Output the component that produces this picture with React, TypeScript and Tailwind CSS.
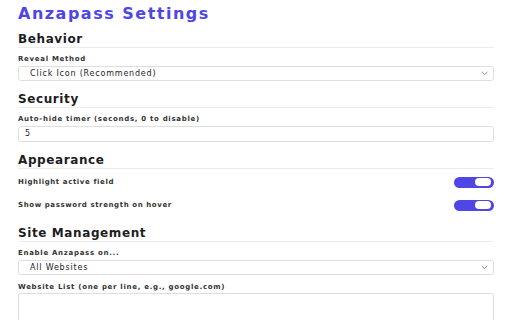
import React from "react";

const font = { fontFamily: '"DejaVu Sans", "Liberation Sans", sans-serif' };

function SectionHeading({ children, className = "" }: { children: React.ReactNode; className?: string }) {
  return (
    <h2
      className={`h-[16px] border-b border-[#ececec] pb-[1px] text-[12px] font-bold leading-[14px] tracking-[0.6px] text-[#1d1d1f] ${className}`}
    >
      {children}
    </h2>
  );
}

function Label({ children, className = "" }: { children: React.ReactNode; className?: string }) {
  return (
    <label className={`block h-[10px] text-[7px] font-bold leading-[10px] tracking-[0.7px] text-[#333] ${className}`}>
      {children}
    </label>
  );
}

function Chevron() {
  return (
    <svg width="7" height="5" viewBox="0 0 7 5" className="text-[#777]">
      <path d="M1 1.2 L3.5 3.6 L6 1.2" fill="none" stroke="currentColor" strokeWidth="0.9" strokeLinecap="round" />
    </svg>
  );
}

function SelectBox({ value }: { value: string }) {
  return (
    <div className="mt-[2px] flex h-[15px] items-center justify-between rounded-[3px] border border-[#dedede] bg-white pl-[11px] pr-[5px]">
      <span className="text-[8px] leading-[10px] tracking-[0.8px] text-[#1d1d1f]">{value}</span>
      <Chevron />
    </div>
  );
}

function Toggle() {
  return (
    <div className="flex h-[11px] w-[40px] items-center justify-end rounded-full bg-[#4f46e5] pr-[3px]">
      <div className="h-[8px] w-[16px] rounded-full bg-white" />
    </div>
  );
}

function ToggleRow({ label }: { label: string }) {
  return (
    <div className="flex h-[22px] items-center justify-between">
      <span className="text-[7px] font-bold tracking-[0.6px] text-[#333]">{label}</span>
      <Toggle />
    </div>
  );
}

export default function App() {
  return (
    <div className="h-[320px] w-[512px] overflow-hidden bg-white px-[18px] pt-[4px]" style={font}>
      <h1 className="h-[20px] text-[16px] font-bold leading-[20px] tracking-[1.5px] text-[#4f46e5]">
        Anzapass Settings
      </h1>

      <SectionHeading className="mt-[8px]">Behavior</SectionHeading>
      <Label className="mt-[6px]">Reveal Method</Label>
      <SelectBox value="Click Icon (Recommended)" />

      <SectionHeading className="mt-[11px]">Security</SectionHeading>
      <Label className="mt-[6px]">Auto-hide timer (seconds, 0 to disable)</Label>
      <div className="mt-[2px] flex h-[16px] items-center rounded-[3px] border border-[#dedede] bg-white pl-[6px]">
        <span className="text-[8px] tracking-[0.8px] text-[#1d1d1f]">5</span>
      </div>

      <SectionHeading className="mt-[11px]">Appearance</SectionHeading>
      <div className="mt-[2px] flex flex-col gap-[1px]">
        <ToggleRow label="Highlight active field" />
        <ToggleRow label="Show password strength on hover" />
      </div>

      <SectionHeading className="mt-[10px]">Site Management</SectionHeading>
      <Label className="mt-[6px]">Enable Anzapass on...</Label>
      <SelectBox value="All Websites" />

      <Label className="mt-[7px]">Website List (one per line, e.g., google.com)</Label>
      <div className="mt-[1px] h-[60px] rounded-[3px] border border-[#dedede] bg-white" />
    </div>
  );
}
